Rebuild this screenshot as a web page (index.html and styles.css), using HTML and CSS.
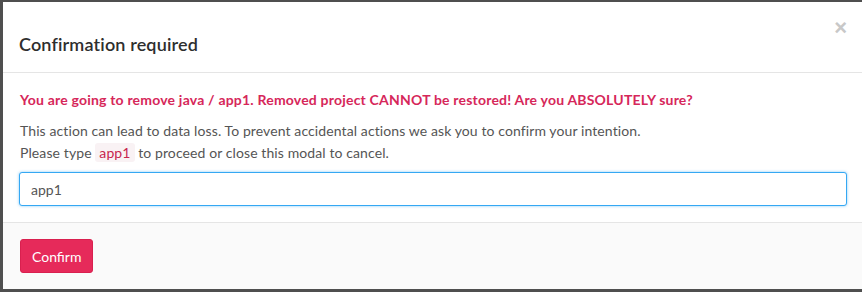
FILE: index.html
```html
<!DOCTYPE html>
<html lang="en">
<head>
    <meta charset="UTF-8">
    <meta name="viewport" content="width=device-width, initial-scale=1.0">
    <title>Confirmation required</title>
    <link rel="stylesheet" href="styles.css">
</head>
<body>

    <!-- Modal -->
    <div class="modal">
        <div class="modal-header">
            <h3 class="modal-title">Confirmation required</h3>
            <button class="close" type="button">&times;</button>
        </div>

        <div class="modal-body">
            <p class="text-danger">You are going to remove java / app1. Removed project CANNOT be restored! Are you ABSOLUTELY sure?</p>
            <p class="help">
                This action can lead to data loss. To prevent accidental actions we ask you to confirm your intention.<br>
                Please type <code>app1</code> to proceed or close this modal to cancel.
            </p>
            <input class="form-control" type="text" value="app1">
        </div>

        <div class="modal-footer">
            <button class="btn-danger" type="button">Confirm</button>
        </div>
    </div>

</body>
</html>
```

FILE: styles.css
```css
body {
    font-family: Lato, "Open Sans", sans-serif;
    font-size: 14px;
    background: #4f4f4f;
    margin: 0;
    padding: 2px 0 3px 3px;
    height: 287px;
}
.modal {
    background: white;
    height: 287px;
    display: flex;
    flex-direction: column;
}
.modal-header {
    position: relative;
    padding: 30px 16px 16px 16px;
    border-bottom: 1px solid #e5e5e5;
}
.modal-title {
    margin: 0;
    font-size: 18px;
    line-height: 24px;
    font-weight: 600;
    letter-spacing: 0.15px;
    color: #2e2e2e;
}
.close {
    position: absolute;
    top: 14px;
    right: 15px;
    background: none;
    border: none;
    padding: 0;
    font-family: Arial, sans-serif;
    font-size: 22px;
    line-height: 24px;
    font-weight: bold;
    color: #c8c8c8;
    cursor: pointer;
}
.modal-body {
    padding: 17px 15px 16px 16px;
    border-bottom: 1px solid #e5e5e5;
}
.text-danger {
    margin: 0 0 10px 1px;
    line-height: 20px;
    font-weight: bold;
    letter-spacing: 0.2px;
    color: #d6275a;
}
.help {
    margin: 0 0 8px 1px;
    line-height: 22px;
    letter-spacing: 0.1px;
    color: #555;
}
code {
    font-family: inherit;
    font-size: 14px;
    padding: 1px 4px;
    color: #c7254e;
    background: #f9f2f4;
    border-radius: 3px;
}
.form-control {
    display: block;
    box-sizing: border-box;
    width: 100%;
    height: 34px;
    padding: 6px 11px;
    font-family: inherit;
    font-size: 14px;
    color: #555;
    border: 1px solid #35a8f3;
    border-radius: 3px;
    box-shadow: 0 0 3px rgba(53, 168, 243, 0.6);
    outline: none;
}
.modal-footer {
    flex: 1;
    background: #fafafa;
    padding: 16px 17px;
}
.btn-danger {
    height: 34px;
    padding: 0 11px;
    font-family: inherit;
    font-size: 14px;
    color: white;
    background: #e62a5a;
    border: 1px solid #d9204f;
    border-radius: 3px;
    cursor: pointer;
}
```
